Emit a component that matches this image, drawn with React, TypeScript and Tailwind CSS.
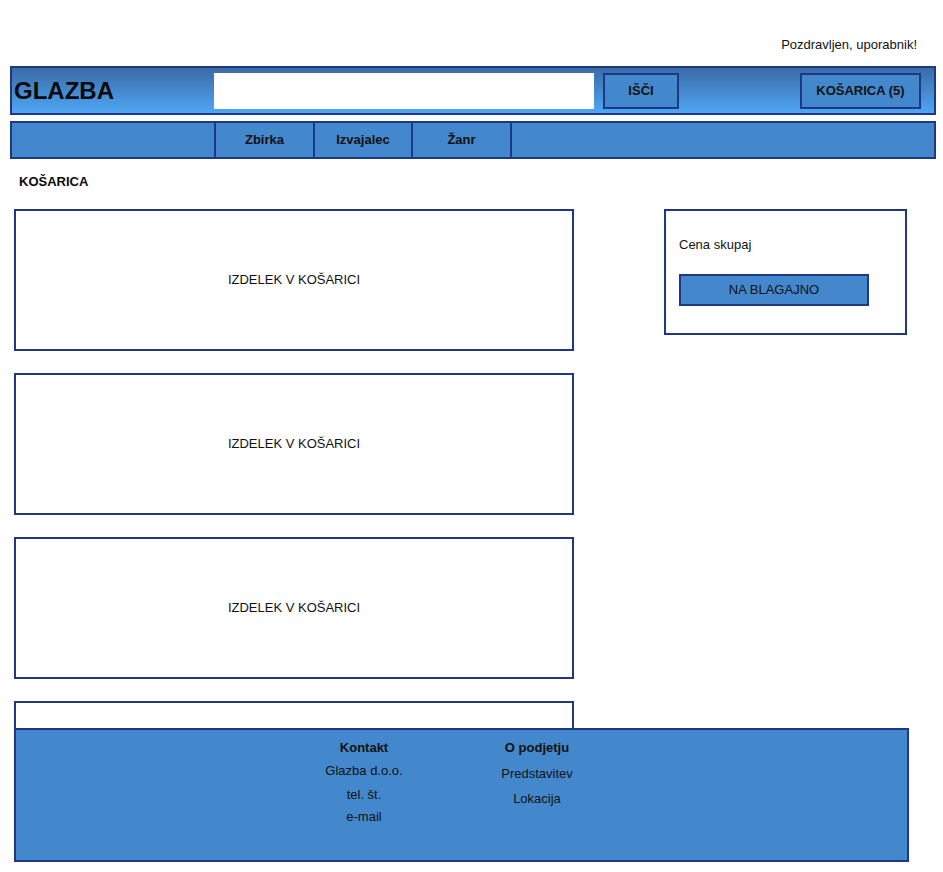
const font = { fontFamily: '"Liberation Sans", Arial, sans-serif' };

const navItems = ['Zbirka', 'Izvajalec', 'Žanr'];
const navWidths = ['w-[99px]', 'w-[98px]', 'w-[99px]'];

function CartItem({ label = 'IZDELEK V KOŠARICI' }: { label?: string }) {
    return (
        <div className="h-[142px] shrink-0 border-2 border-[#1f3886] flex items-center justify-center text-[13px] text-[#111]">
            {label}
        </div>
    );
}

export default function App() {
    return (
        <div className="w-[943px] h-[872px] bg-white text-black" style={font}>
            {/* greeting */}
            <div className="h-[66px] flex items-end justify-end pr-[26px] pb-[12px]">
                <span className="text-[13px] leading-[18px] text-[#111]">Pozdravljen, uporabnik!</span>
            </div>

            {/* header */}
            <div className="ml-[10px] w-[926px] h-[49px] border-2 border-[#1f3886] bg-linear-to-b from-[#3a6ca5] to-[#4fa6f6] flex items-center">
                <div className="w-[202px] pl-[2px] text-[24px] font-bold leading-none text-[#0a0a0a]">GLAZBA</div>
                <input className="w-[380px] h-[36px] bg-white outline-none px-2 text-[13px]" />
                <button className="ml-[9px] w-[76px] h-[36px] border-2 border-[#1f3886] bg-[#4387cc] text-[13px] font-bold text-[#111]">
                    IŠČI
                </button>
                <div className="flex-1" />
                <button className="mr-[13px] w-[121px] h-[36px] border-2 border-[#1f3886] bg-[#4387cc] text-[13px] font-bold text-[#111]">
                    KOŠARICA (5)
                </button>
            </div>

            {/* navigation */}
            <div className="mt-[6px] ml-[10px] w-[926px] h-[38px] border-2 border-[#1f3886] bg-[#4387cc] flex">
                <div className="w-[204px] border-r-2 border-[#1f3886]" />
                {navItems.map((item, i) => (
                    <div
                        key={item}
                        className={`${navWidths[i]} border-r-2 border-[#1f3886] flex items-center justify-center text-[13px] font-bold text-[#111]`}
                    >
                        {item}
                    </div>
                ))}
            </div>

            {/* content */}
            <div className="h-[569px] overflow-hidden">
                <div className="mt-[14px] ml-[19px] h-[18px] leading-[18px] text-[13px] font-bold text-[#0a0a0a]">KOŠARICA</div>
                <div className="mt-[18px] ml-[14px] flex items-start">
                    <div className="w-[560px] flex flex-col gap-[22px]">
                        <CartItem />
                        <CartItem />
                        <CartItem />
                        <CartItem label="" />
                    </div>
                    <div className="ml-[90px] w-[243px] h-[126px] border-2 border-[#1f3886] pl-[13px] pt-[26px]">
                        <div className="text-[13px] leading-[16px] text-[#111]">Cena skupaj</div>
                        <button className="mt-[21px] w-[190px] h-[32px] border-2 border-[#1f3886] bg-[#4387cc] text-[13px] text-[#111]">
                            NA BLAGAJNO
                        </button>
                    </div>
                </div>
            </div>

            {/* footer */}
            <div className="ml-[14px] w-[895px] h-[134px] border-2 border-[#1f3886] bg-[#4388cc] flex pl-[288px] pt-[10px] text-[13px] text-[#111]">
                <div className="w-[120px] flex flex-col items-center">
                    <div className="font-bold leading-[16px]">Kontakt</div>
                    <div className="mt-[7px] leading-[16px]">Glazba d.o.o.</div>
                    <div className="mt-[8px] leading-[16px]">tel. št.</div>
                    <div className="mt-[6px] leading-[16px]">e-mail</div>
                </div>
                <div className="ml-[53px] w-[120px] flex flex-col items-center">
                    <div className="font-bold leading-[16px]">O podjetju</div>
                    <div className="mt-[10px] leading-[16px]">Predstavitev</div>
                    <div className="mt-[9px] leading-[16px]">Lokacija</div>
                </div>
            </div>
        </div>
    );
}
